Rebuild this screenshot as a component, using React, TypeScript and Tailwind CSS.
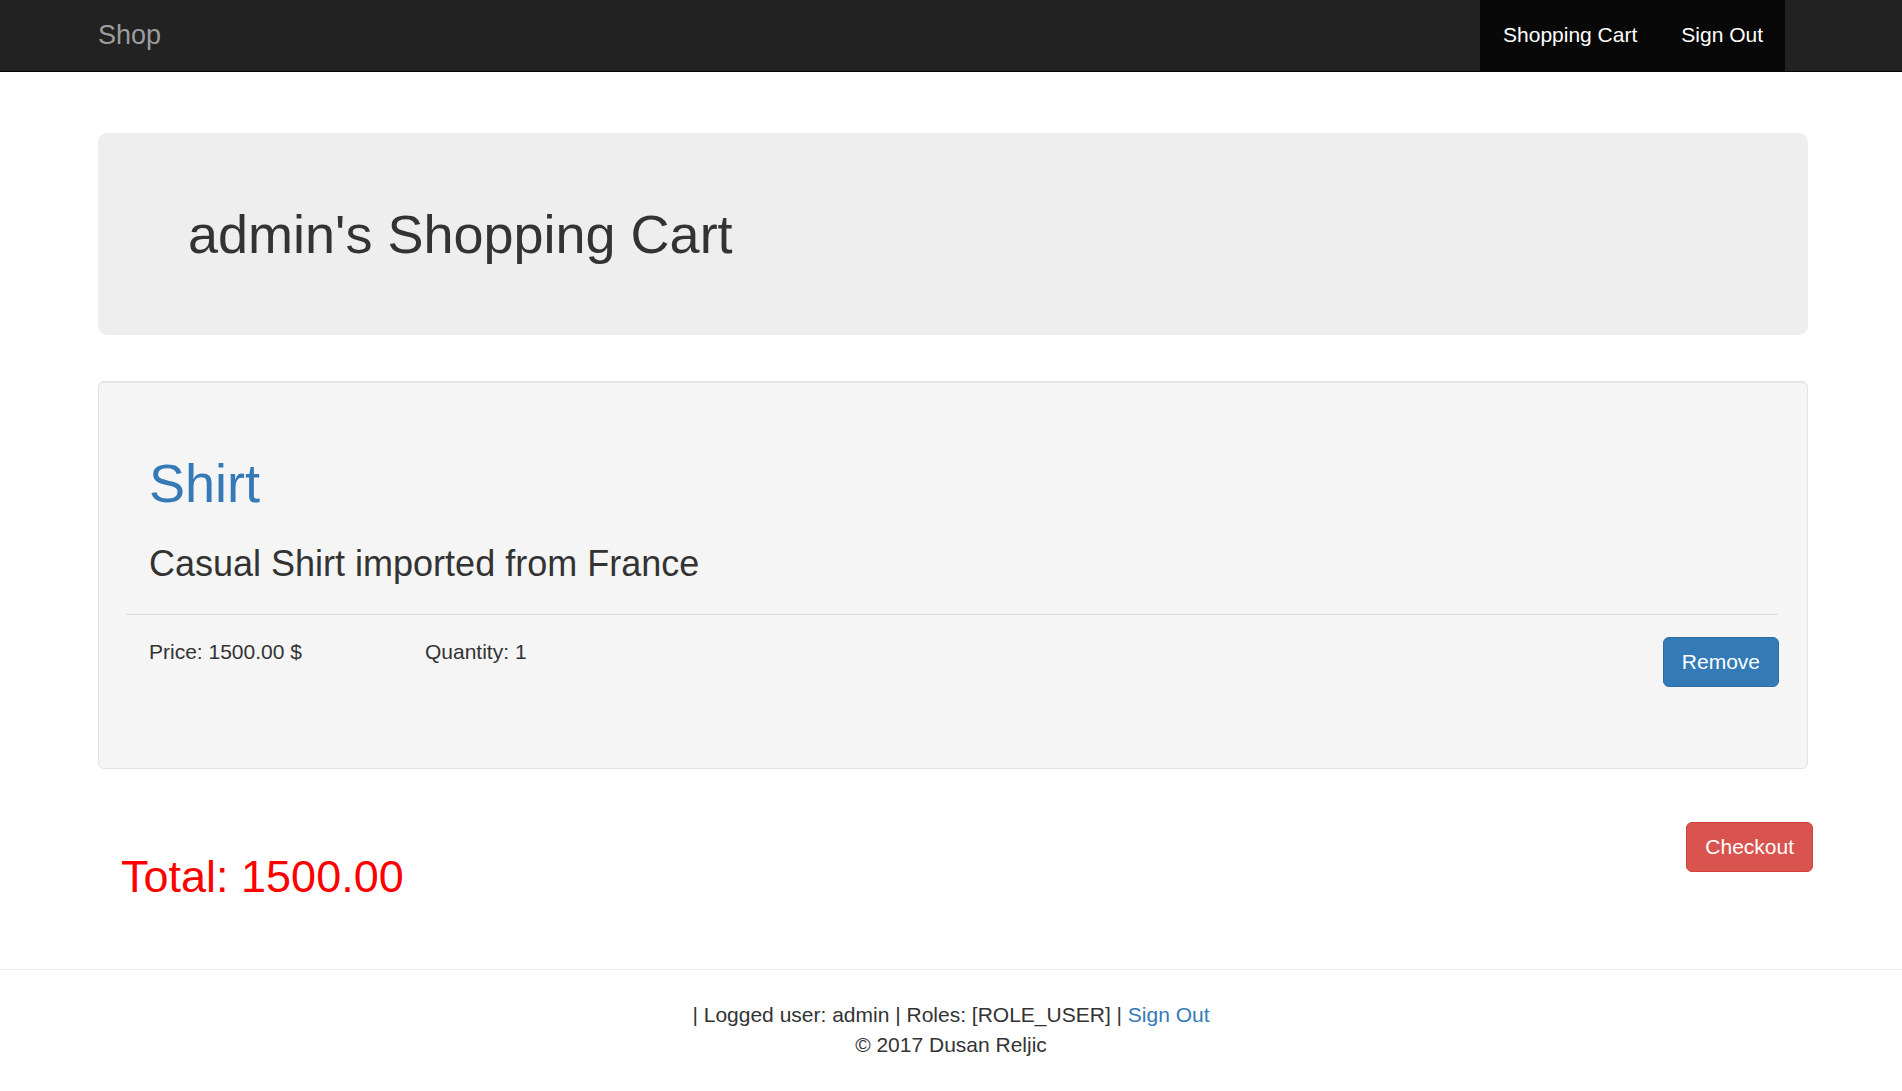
export default function App() {
  return (
    <div className="min-h-screen bg-white font-['Liberation_Sans',Arial,sans-serif] text-[#333]">
      <nav className="h-[72px] bg-[#222] border-b border-[#080808]">
        <div className="ml-[98px] w-[1710px] h-[71px] flex items-center justify-between">
          <a className="text-[27px] text-[#9d9d9d]">Shop</a>
          <ul className="flex h-full bg-[#080808] mr-[23px]">
            <li>
              <a className="flex h-full items-center pb-[2px] pl-[23px] pr-[22px] text-[21px] text-white">Shopping Cart</a>
            </li>
            <li>
              <a className="flex h-full items-center pb-[2px] px-[22px] text-[21px] text-white">Sign Out</a>
            </li>
          </ul>
        </div>
      </nav>

      <div className="ml-[98px] w-[1710px]">
        <div className="mt-[61px] h-[202px] px-[90px] pt-[2px] rounded-[9px] bg-[#eee] flex items-center">
          <h1 className="text-[54px] leading-[1.1]">admin's Shopping Cart</h1>
        </div>

        <div className="mt-[46px] rounded-[6px] border border-[#e3e3e3] bg-[#f5f5f5] pl-[27px] pr-[29px] pt-[72px] pb-[81px] shadow-[inset_0_1px_1px_rgba(0,0,0,0.05)]">
          <h1 className="pl-[23px] text-[54px] leading-[59px] text-[#337ab7]">Shirt</h1>
          <h3 className="mt-[31px] pl-[23px] text-[36px] leading-[40px]">Casual Shirt imported from France</h3>
          <div className="mt-[30px] border-t border-[#ddd]" />
          <div className="mt-[22px] flex items-start pl-[23px]">
            <div className="w-[276px] text-[21px] leading-[30px]">Price: 1500.00 $</div>
            <div className="text-[21px] leading-[30px]">Quantity: 1</div>
            <button className="ml-auto -mr-[1px] h-[50px] px-[18px] rounded-[6px] border border-[#2e6da4] bg-[#337ab7] text-[21px] text-white">
              Remove
            </button>
          </div>
        </div>

        <div className="mt-[53px] flex items-start justify-between">
          <h2 className="pl-[23px] pt-[30px] text-[45px] leading-[49.5px] text-[#ff0000]">Total: 1500.00</h2>
          <button className="-mr-[5px] h-[50px] px-[18px] rounded-[6px] border border-[#d43f3a] bg-[#d9534f] text-[21px] text-white">
            Checkout
          </button>
        </div>
      </div>

      <footer className="mt-[67px] border-t border-[#eee] pt-[30px] pb-[30px] text-center text-[21px] leading-[30px]">
        <p>
          | Logged user: admin | Roles: [ROLE_USER] | <a className="text-[#337ab7]">Sign Out</a>
        </p>
        <p>© 2017 Dusan Reljic</p>
      </footer>
    </div>
  );
}
